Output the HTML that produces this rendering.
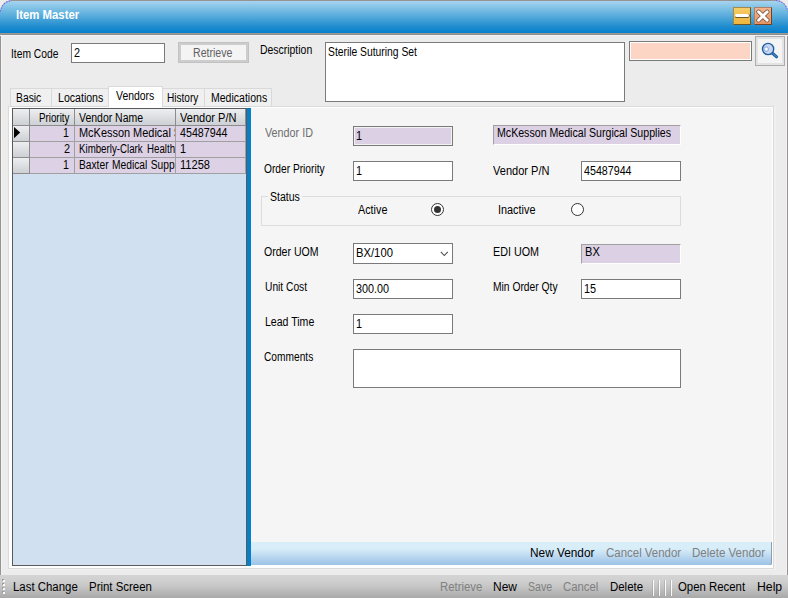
<!DOCTYPE html>
<html><head><meta charset="utf-8"><title>Item Master</title>
<style>
html,body{margin:0;padding:0}
body{width:788px;height:598px;position:relative;overflow:hidden;background:#ececec;font-family:"Liberation Sans",sans-serif;font-size:11px;color:#000}
div,span,i,b{position:absolute;box-sizing:border-box;display:block}
.tx{z-index:5;transform-origin:0 0;white-space:nowrap;line-height:14px;height:14px;font-weight:normal}
.m{font-size:12.5px}
.s{font-size:12px}
.t{font-size:12.5px;font-weight:bold;color:#fff}
/* window chrome */
#title{left:0;top:0;width:788px;height:36px;background:#979393;border-radius:13px 13px 0 0;overflow:hidden}
#title .grad{left:0;top:1px;width:788px;height:32px;border-radius:12px 12px 0 0;background:linear-gradient(#a6d4ef 0%,#7bbfe4 25%,#4aa4d8 55%,#1f8ccf 80%,#0580cb 100%)}
#title .ln{left:0;top:33px;width:788px;height:3px;background:linear-gradient(#a09892 0,#a09892 33.3%,#8e8e8e 33.3%,#8e8e8e 66.6%,#f2f2f2 66.6%,#f2f2f2 100%)}
#bl{left:0;top:36px;width:2px;height:539px;background:linear-gradient(90deg,#979393 50%,#f3f3f3 50%)}
#br{left:786px;top:36px;width:2px;height:539px;background:linear-gradient(90deg,#f3f3f3 50%,#979393 50%)}
.wb{top:7px;width:18px;height:18px;border:1px solid}
#min{left:733px;background:linear-gradient(#f7cd6a,#f3bf4c 50%,#efb540);border-color:#a8894a #6e5420 #6e5420 #a8894a}
#min i{left:1px;top:6px;width:14px;height:3px;background:#fff;border-radius:1.5px;box-shadow:0 1px 0 #6b5a30,1px 0 0 #8a7440}
#cls{left:754px;background:linear-gradient(#f3b48c,#eda274 50%,#e89462);border-color:#a98268 #6e4428 #6e4428 #a98268}
/* inputs */
.inp{background:#fff;border:1px solid #7a7a7a}
.ro{background:#dcd0e4;border:1px solid #7a7a7a;box-shadow:inset 0 0 0 1px #f2f2f2}
.sunk{background:#dcd0e4;border:1px solid;border-color:#a0a0a0 #fff #fff #a0a0a0}
#btn{left:178px;top:42px;width:71px;height:21px;background:#f4f4f4;border:1px solid #c2c2c2;box-shadow:inset 0 0 0 2px #cdcdcd}
#pink{left:629px;top:41px;width:123px;height:20px;background:#fdd5c5;border:1px solid #7a7a7a;box-shadow:inset 0 0 0 1px #fff}
#srch{left:755px;top:36px;width:30px;height:30px;background:#f4f4f4;border:1px solid #adadad;box-shadow:inset 0 0 0 2px #e3e3e3}
/* tabs */
.tab{top:88px;height:18px;background:#f0f0f0;border:1px solid #d9d9d9;border-bottom:none}
.tab.sel{top:86px;height:21px;background:#fff;z-index:2}
#page{left:8px;top:106px;width:766px;height:463px;background:#fff;border:1px solid #dadada;box-shadow:1px 1px 0 #f1f1f1,2px 1px 0 #f0f0f0}
#grid{left:12px;top:108px;width:235px;height:458px;background:#d0e0f1;border:1px solid #5a5a5a}
#split{left:247px;top:108px;width:4px;height:458px;background:#0480c9}
#form{left:251px;top:108px;width:521px;height:457px;background:#f5f5f5}
.hc{top:109px;height:17px;background:linear-gradient(#eceef0,#dddfe2 50%,#cdd0d4);border-right:1px solid #8c8c8c;border-bottom:1px solid #8c8c8c}
.rh{left:13px;width:17px;height:16px;background:linear-gradient(#eceef0,#dddfe2 50%,#cdd0d4);border-right:1px solid #8c8c8c;border-bottom:1px solid #8c8c8c}
.c{height:16px;background:#ddd2e5;border-right:1px solid #a0a0a0;border-bottom:1px solid #a0a0a0;overflow:hidden}
#gb{left:261px;top:196px;width:420px;height:30px;border:1px solid #dcdcdc}
.radio{width:13px;height:13px;border-radius:50%;border:1px solid #333;background:#fff}
.radio b{left:2px;top:2px;width:7px;height:7px;border-radius:50%;background:#333}
#vts{left:251px;top:542px;width:521px;height:23px;border-radius:0 0 2px 0;box-shadow:inset -1px 0 0 #8e9cb0;background:linear-gradient(#d9eef9 0,#d7edf8 30%,#c6e1f4 50%,#b0d0ec 75%,#9dc4e7 100%)}
#status{left:0;top:575px;width:788px;height:23px;background:linear-gradient(#d4d4d4 0,#cfcfcf 28%,#c3c3c3 55%,#b3b3b3 82%,#a9a9a9 100%)}
.sep{top:580px;width:1px;height:16px;background:#fbfbfb;box-shadow:-1px 0 0 rgba(120,120,120,0.25)}

</style></head>
<body>
<!-- window chrome -->
<div id="title"><div class="grad"></div><div class="ln"></div></div>
<svg width="15" height="15" viewBox="0 0 15 15" style="position:absolute;left:0;top:0"><path d="M0.5 11.5 A 12 12 0 0 1 12 0.5" fill="none" stroke="#6d6dfb" stroke-width="1.2" stroke-dasharray="1.4 1.4"/></svg>
<svg width="15" height="15" viewBox="0 0 15 15" style="position:absolute;left:773px;top:0"><path d="M3 0.5 A 12 12 0 0 1 14.5 11.5" fill="none" stroke="#6d6dfb" stroke-width="1.2" stroke-dasharray="1.4 1.4"/></svg>
<div id="bl"></div><div id="br"></div>
<div class="wb" id="min"><i></i></div>
<div class="wb" id="cls"><svg width="16" height="16" viewBox="0 0 16 16" style="position:absolute;left:0;top:0"><path d="M3.6 3.8 L12.2 12.2 M12.2 3.8 L3.6 12.2" stroke="#6a4a38" stroke-width="4.4" stroke-linecap="round"/><path d="M3.6 3.8 L12.2 12.2 M12.2 3.8 L3.6 12.2" stroke="#fff" stroke-width="3" stroke-linecap="round"/></svg></div>
<!-- header row -->
<div class="inp" style="left:71px;top:43px;width:94px;height:20px"></div>
<div id="btn"></div>
<div class="inp" style="left:325px;top:42px;width:300px;height:60px"></div>
<div id="pink"></div>
<div id="srch"><svg width="28" height="28" viewBox="0 0 28 28" style="position:absolute;left:0;top:0"><path d="M16.2 16 L20.6 19.8" stroke="#1c5fa5" stroke-width="3" stroke-linecap="round"/><path d="M16.6 16.3 L20.4 19.6" stroke="#6f9bd0" stroke-width="0.9" stroke-linecap="round"/><circle cx="12.1" cy="12" r="5.6" fill="#cad6ef" stroke="#1c5fa5" stroke-width="1.4"/><circle cx="10.3" cy="12.1" r="2.3" fill="#dfe8f8" stroke="#86a6dc" stroke-width="0.9"/><circle cx="10.2" cy="12.1" r="1.1" fill="#fff"/></svg></div>
<!-- tab control -->
<div id="page"></div>
<div class="tab" style="left:10px;width:42px"></div>
<div class="tab" style="left:51px;width:58px"></div>
<div class="tab sel" style="left:108px;width:55px"></div>
<div class="tab" style="left:162px;width:43px"></div>
<div class="tab" style="left:204px;width:68px"></div>
<div id="grid"></div>
<div id="split"></div>
<div id="form"></div>
<!-- grid header -->
<div class="hc" style="left:13px;width:17px"></div>
<div class="hc" style="left:30px;width:45px"></div>
<div class="hc" style="left:75px;width:101px"></div>
<div class="hc" style="left:176px;width:70px"></div>
<!-- grid rows -->
<div class="rh" style="top:126px"><svg width="8" height="12" viewBox="0 0 8 12" style="position:absolute;left:1px;top:1px"><path d="M0 0 L6.2 5.6 L0 11.2 Z" fill="#000"/></svg></div>
<div class="rh" style="top:142px"></div>
<div class="rh" style="top:158px"></div>
<div class="c" style="left:30px;top:126px;width:45px"></div><div class="c" style="left:75px;top:126px;width:101px"></div><div class="c" style="left:176px;top:126px;width:70px"></div>
<div class="c" style="left:30px;top:142px;width:45px"></div><div class="c" style="left:75px;top:142px;width:101px"></div><div class="c" style="left:176px;top:142px;width:70px"></div>
<div class="c" style="left:30px;top:158px;width:45px"></div><div class="c" style="left:75px;top:158px;width:101px"></div><div class="c" style="left:176px;top:158px;width:70px"></div>
<!-- form widgets -->
<div class="ro" style="left:353px;top:126px;width:100px;height:20px"></div>
<div class="sunk" style="left:493px;top:125px;width:188px;height:20px"></div>
<div class="inp" style="left:353px;top:161px;width:100px;height:20px"></div>
<div class="inp" style="left:581px;top:161px;width:100px;height:20px"></div>
<div id="gb"></div>
<div style="left:268px;top:194px;width:34px;height:6px;background:#f5f5f5"></div>
<div class="radio" style="left:431px;top:203px"><b></b></div>
<div class="radio" style="left:571px;top:203px"></div>
<div class="inp" style="left:353px;top:243px;width:100px;height:21px"><svg width="10" height="7" viewBox="0 0 10 7" style="position:absolute;left:86px;top:7px"><path d="M0.8 0.9 L4.3 4.5 L7.8 0.9" fill="none" stroke="#484848" stroke-width="1.05"/></svg></div>
<div class="sunk" style="left:581px;top:244px;width:100px;height:20px"></div>
<div class="inp" style="left:353px;top:279px;width:100px;height:20px"></div>
<div class="inp" style="left:581px;top:279px;width:100px;height:20px"></div>
<div class="inp" style="left:353px;top:314px;width:100px;height:20px"></div>
<div class="inp" style="left:353px;top:349px;width:328px;height:39px"></div>
<div id="vts"></div>
<!-- status strip -->
<div id="status"></div>
<svg width="4" height="16" viewBox="0 0 4 16" style="position:absolute;left:2px;top:579px"><rect x="0" y="0" width="2" height="2" fill="#9c9c9c"/><rect x="1" y="1" width="2" height="2" fill="#fafafa"/><rect x="0" y="4" width="2" height="2" fill="#9c9c9c"/><rect x="1" y="5" width="2" height="2" fill="#fafafa"/><rect x="0" y="8" width="2" height="2" fill="#9c9c9c"/><rect x="1" y="9" width="2" height="2" fill="#fafafa"/><rect x="0" y="12" width="2" height="2" fill="#9c9c9c"/><rect x="1" y="13" width="2" height="2" fill="#fafafa"/></svg>
<div class="sep" style="left:653px"></div><div class="sep" style="left:659px"></div><div class="sep" style="left:665px"></div><div class="sep" style="left:671px"></div>

<!-- text labels -->
<span class="tx t" style="left:16.01px;top:8px;transform:scaleX(0.9095);">Item Master</span>
<span class="tx m" style="left:11.35px;top:47px;transform:scaleX(0.8221);">Item Code</span>
<span class="tx m" style="left:73.81px;top:46px;transform:scaleX(0.8700);">2</span>
<span class="tx m" style="left:192.81px;top:46px;transform:scaleX(0.8461);color:#606060">Retrieve</span>
<span class="tx m" style="left:260.40px;top:43px;transform:scaleX(0.8347);">Description</span>
<span class="tx m" style="left:327.70px;top:45px;transform:scaleX(0.8257);">Sterile Suturing Set</span>
<span class="tx m" style="left:16.16px;top:91px;transform:scaleX(0.8258);">Basic</span>
<span class="tx m" style="left:57.82px;top:91px;transform:scaleX(0.8465);">Locations</span>
<span class="tx m" style="left:116.14px;top:89px;transform:scaleX(0.8347);">Vendors</span>
<span class="tx m" style="left:167.44px;top:91px;transform:scaleX(0.8053);">History</span>
<span class="tx m" style="left:211.46px;top:91px;transform:scaleX(0.8421);">Medications</span>
<span class="tx m" style="left:39.07px;top:111px;transform:scaleX(0.7816);">Priority</span>
<span class="tx m" style="left:78.90px;top:111px;transform:scaleX(0.8378);">Vendor Name</span>
<span class="tx m" style="left:179.76px;top:111px;transform:scaleX(0.8833);">Vendor P/N</span>
<span class="tx m" style="left:62.73px;top:126px;transform:scaleX(0.8500);">1</span>
<span class="tx m" style="left:64.40px;top:142px;transform:scaleX(0.8700);">2</span>
<span class="tx m" style="left:62.73px;top:158px;transform:scaleX(0.8500);">1</span>
<div style="left:78.79px;top:126px;width:96.21px;height:14px;overflow:hidden"><span class="tx m" style="left:0;top:0;transform:scaleX(0.8752);">McKesson Medical Surgical Supplies</span></div>
<div style="left:79.30px;top:142px;width:95.70px;height:14px;overflow:hidden"><span class="tx m" style="left:0;top:0;transform:scaleX(0.7765);word-spacing:2.2px">Kimberly-Clark Healthcare</span></div>
<div style="left:78.88px;top:158px;width:96.12px;height:14px;overflow:hidden"><span class="tx m" style="left:0;top:0;transform:scaleX(0.8182);word-spacing:0.8px">Baxter Medical Supply</span></div>
<span class="tx m" style="left:180.09px;top:126px;transform:scaleX(0.8544);">45487944</span>
<span class="tx m" style="left:180.40px;top:142px;transform:scaleX(0.8700);">1</span>
<span class="tx m" style="left:180.06px;top:158px;transform:scaleX(0.8881);">11258</span>
<span class="tx m" style="left:265.02px;top:126px;transform:scaleX(0.8622);color:#6d6d6d">Vendor ID</span>
<span class="tx m" style="left:264.43px;top:162px;transform:scaleX(0.8159);">Order Priority</span>
<span class="tx m" style="left:492.94px;top:164px;transform:scaleX(0.8842);">Vendor P/N</span>
<span class="tx m" style="left:270.39px;top:190px;transform:scaleX(0.8436);">Status</span>
<span class="tx m" style="left:357.91px;top:203px;transform:scaleX(0.8634);">Active</span>
<span class="tx m" style="left:498.20px;top:203px;transform:scaleX(0.8700);">Inactive</span>
<span class="tx m" style="left:263.97px;top:245px;transform:scaleX(0.8442);">Order UOM</span>
<span class="tx m" style="left:493.44px;top:245px;transform:scaleX(0.8614);">EDI UOM</span>
<span class="tx m" style="left:264.81px;top:280px;transform:scaleX(0.8184);">Unit Cost</span>
<span class="tx m" style="left:492.73px;top:280px;transform:scaleX(0.8228);">Min Order Qty</span>
<span class="tx m" style="left:265.42px;top:315px;transform:scaleX(0.8444);">Lead Time</span>
<span class="tx m" style="left:263.84px;top:350px;transform:scaleX(0.8146);">Comments</span>
<span class="tx m" style="left:355.73px;top:129px;transform:scaleX(0.8700);">1</span>
<span class="tx m" style="left:497.03px;top:126px;transform:scaleX(0.8487);">McKesson Medical Surgical Supplies</span>
<span class="tx m" style="left:355.73px;top:164px;transform:scaleX(0.8700);">1</span>
<span class="tx m" style="left:584.15px;top:164px;transform:scaleX(0.8547);">45487944</span>
<span class="tx m" style="left:356.22px;top:246px;transform:scaleX(0.8996);">BX/100</span>
<span class="tx m" style="left:585.46px;top:245px;transform:scaleX(0.8857);">BX</span>
<span class="tx m" style="left:356.36px;top:282px;transform:scaleX(0.8628);">300.00</span>
<span class="tx m" style="left:584.09px;top:282px;transform:scaleX(0.8700);">15</span>
<span class="tx m" style="left:355.73px;top:317px;transform:scaleX(0.8700);">1</span>
<span class="tx s" style="left:530.07px;top:546px;transform:scaleX(0.9860);">New Vendor</span>
<span class="tx s" style="left:605.95px;top:546px;transform:scaleX(0.9551);color:#808080">Cancel Vendor</span>
<span class="tx s" style="left:692.29px;top:546px;transform:scaleX(0.9616);color:#808080">Delete Vendor</span>
<span class="tx s" style="left:13.12px;top:580px;transform:scaleX(0.9514);">Last Change</span>
<span class="tx s" style="left:88.98px;top:580px;transform:scaleX(0.9533);">Print Screen</span>
<span class="tx s" style="left:440.39px;top:580px;transform:scaleX(0.9446);color:#808080">Retrieve</span>
<span class="tx s" style="left:493.33px;top:580px;transform:scaleX(0.9958);">New</span>
<span class="tx s" style="left:527.86px;top:580px;transform:scaleX(0.8836);color:#808080">Save</span>
<span class="tx s" style="left:563.08px;top:580px;transform:scaleX(0.9477);color:#808080">Cancel</span>
<span class="tx s" style="left:609.89px;top:580px;transform:scaleX(0.9512);">Delete</span>
<span class="tx s" style="left:678.15px;top:580px;transform:scaleX(0.9489);">Open Recent</span>
<span class="tx s" style="left:757.08px;top:580px;transform:scaleX(1.0194);">Help</span>
</body></html>
